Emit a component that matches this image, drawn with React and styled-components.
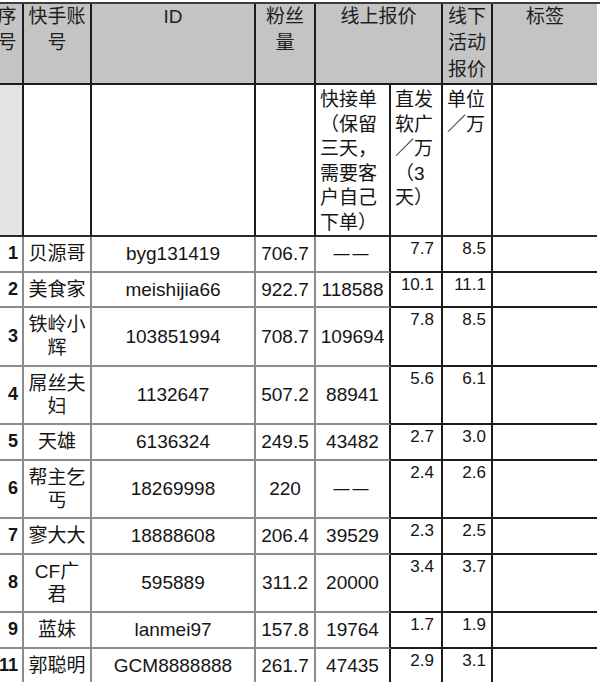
import React from "react";
import styled, { createGlobalStyle } from "styled-components";

const GlobalStyle = createGlobalStyle`
  html, body {
    margin: 0;
    padding: 0;
    background: #ffffff;
    width: 600px;
    height: 690px;
    overflow: hidden;
  }
`;

const DARK = "#1c1c1c";
const GRAY = "#8c8c8c";

const Sheet = styled.div`
  display: grid;
  grid-template-columns: 32px 68px 164px 60px 75px 52px 50px 104px;
  margin: 2px 0 0 -8px;
  border-top: 2px solid #3c3c3c;
  font-family: "Liberation Sans", "Noto Sans CJK SC", sans-serif;
  font-size: 19px;
  color: #151515;
`;

const HeadCell = styled.div`
  grid-column: span ${(p) => p.$span || 1};
  background: #c3c4c3;
  border-right: ${(p) => (p.$last ? "none" : `2px solid ${DARK}`)};
  border-bottom: 2px solid ${DARK};
  line-height: 26.4px;
  text-align: center;
  padding: 0 2px;
  color: #1e1e1e;
`;

const SubHeadCell = styled.div`
  background: ${(p) => (p.$shade ? "#e3e3e3" : "#ffffff")};
  border-right: ${(p) => (p.$last ? "none" : `2px solid ${DARK}`)};
  border-bottom: 2px solid #2a2a2a;
  line-height: 24.5px;
  text-align: left;
  padding: 3px 2px 0 4px;
  min-height: 152px;
  box-sizing: border-box;
`;

const Cell = styled.div`
  display: flex;
  flex-direction: column;
  justify-content: ${(p) => (p.$top ? "flex-start" : "center")};
  text-align: ${(p) => p.$align || "center"};
  border-right: ${(p) => (p.$rc ? `2px solid ${p.$rc}` : "none")};
  border-bottom: ${(p) => (p.$bc ? `2px solid ${p.$bc}` : "none")};
  line-height: 23px;
  padding: ${(p) => (p.$top ? `0 ${p.$pr || 5}px 0 2px` : "5.25px 4px")};
  font-size: ${(p) => (p.$small ? "17px" : p.$bold ? "18px" : "19px")};
  font-weight: ${(p) => (p.$bold ? 700 : 400)};
`;

const DashText = styled.span`
  font-size: 16px;
  letter-spacing: 3px;
`;

const rows = [
  { n: "1", name: "贝源哥", id: "byg131419", fans: "706.7", q: null, d: "7.7", o: "8.5" },
  { n: "2", name: "美食家", id: "meishijia66", fans: "922.7", q: "118588", d: "10.1", o: "11.1" },
  { n: "3", name: "铁岭小辉", id: "103851994", fans: "708.7", q: "109694", d: "7.8", o: "8.5" },
  { n: "4", name: "屌丝夫妇", id: "1132647", fans: "507.2", q: "88941", d: "5.6", o: "6.1" },
  { n: "5", name: "天雄", id: "6136324", fans: "249.5", q: "43482", d: "2.7", o: "3.0" },
  { n: "6", name: "帮主乞丐", id: "18269998", fans: "220", q: null, d: "2.4", o: "2.6" },
  { n: "7", name: "寥大大", id: "18888608", fans: "206.4", q: "39529", d: "2.3", o: "2.5" },
  { n: "8", name: "CF广君", id: "595889", fans: "311.2", q: "20000", d: "3.4", o: "3.7" },
  { n: "9", name: "蓝妹", id: "lanmei97", fans: "157.8", q: "19764", d: "1.7", o: "1.9" },
  { n: "11", name: "郭聪明", id: "GCM8888888", fans: "261.7", q: "47435", d: "2.9", o: "3.1" },
];

export default function App() {
  return (
    <>
      <GlobalStyle />
      <Sheet>
        <HeadCell>序号</HeadCell>
        <HeadCell>快手账号</HeadCell>
        <HeadCell>ID</HeadCell>
        <HeadCell>粉丝量</HeadCell>
        <HeadCell $span={2}>线上报价</HeadCell>
        <HeadCell>线下活动报价</HeadCell>
        <HeadCell $last>标签</HeadCell>

        <SubHeadCell $shade />
        <SubHeadCell />
        <SubHeadCell />
        <SubHeadCell />
        <SubHeadCell>快接单（保留三天，需要客户自己下单）</SubHeadCell>
        <SubHeadCell>直发软广／万（3天）</SubHeadCell>
        <SubHeadCell>单位／万</SubHeadCell>
        <SubHeadCell $last />

        {rows.map((r, i) => {
          const last = i === rows.length - 1;
          const g = last ? null : GRAY;
          const k = last ? null : DARK;
          return (
            <React.Fragment key={r.n}>
              <Cell $align="right" $bold $rc={GRAY} $bc={g}>{r.n}</Cell>
              <Cell $rc={GRAY} $bc={g}>{r.name}</Cell>
              <Cell $rc={GRAY} $bc={g}>{r.id}</Cell>
              <Cell $rc={GRAY} $bc={g}>{r.fans}</Cell>
              <Cell $rc={DARK} $bc={g}>
                {r.q ? r.q : <DashText>——</DashText>}
              </Cell>
              <Cell $top $small $pr={7} $align="right" $rc={DARK} $bc={k}>{r.d}</Cell>
              <Cell $top $small $pr={5} $align="right" $rc={DARK} $bc={k}>{r.o}</Cell>
              <Cell $bc={k} />
            </React.Fragment>
          );
        })}
      </Sheet>
    </>
  );
}
